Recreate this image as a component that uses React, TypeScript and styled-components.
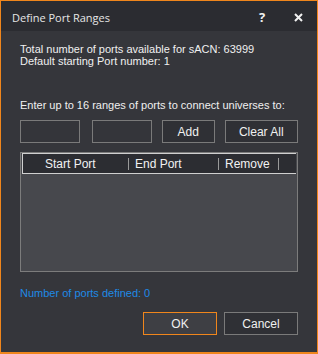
import React from "react";
import styled, { createGlobalStyle } from "styled-components";

const GlobalStyle = createGlobalStyle`
  html, body {
    margin: 0;
    padding: 0;
    background: #34353a;
  }
  * {
    box-sizing: border-box;
  }
`;

const Window = styled.div`
  width: 318px;
  height: 354px;
  display: flex;
  flex-direction: column;
  background: #35363b;
  border: 1px solid #f0861c;
  border-bottom-width: 2px;
  font-family: "Liberation Sans", Arial, sans-serif;
  font-size: 11px;
  color: #f0f0f0;
`;

const TitleBar = styled.div`
  height: 30px;
  display: flex;
  align-items: center;
  padding: 2px 0 0 11px;
  background: #2b2c31;
`;

const Title = styled.div`
  flex: 1;
  font-family: "Open Sans", "Noto Sans", sans-serif;
  font-size: 11px;
  color: #e6e6e6;
`;

const TitleButton = styled.div<{ $w: number }>`
  width: ${(p) => p.$w}px;
  display: flex;
  justify-content: center;
  align-items: center;
  font-family: "Open Sans", sans-serif;
  font-weight: 700;
  font-size: 13px;
  color: #f2f2f2;
`;

const Body = styled.div`
  flex: 1;
  display: flex;
  flex-direction: column;
  padding: 12px 19px 0 19px;
`;

const Info = styled.div`
  line-height: 12px;
`;

const Prompt = styled.div`
  margin-top: 32px;
  line-height: 13px;
`;

const InputRow = styled.div`
  display: flex;
  margin-top: 8px;
  height: 23px;
  gap: 10px;
`;

const Field = styled.input<{ $gap?: number }>`
  width: 60px;
  height: 23px;
  margin-right: ${(p) => p.$gap ?? 0}px;
  background: #34353a;
  border: 1px solid #7a7a7a;
  outline: none;
  color: #f0f0f0;
`;

const Button = styled.button<{ $w: number; $primary?: boolean }>`
  width: ${(p) => p.$w}px;
  height: 23px;
  padding: 0;
  background: ${(p) => (p.$primary ? "#3e3f44" : "#2f3035")};
  border: 1px solid ${(p) => (p.$primary ? "#f0861c" : "#7a7a7a")};
  color: #f0f0f0;
  font-family: "Liberation Sans", Arial, sans-serif;
  font-size: 12px;
`;

const Table = styled.div`
  margin-top: 9px;
  height: 120px;
  border: 1px solid #7c7c7c;
  background: #47484d;
  padding: 0 0 0 1px;
  display: flex;
  flex-direction: column;
`;

const Header = styled.div`
  display: grid;
  grid-template-columns: 106px 90px 60px 1fr;
  height: 21px;
  background: #2c2d32;
  border-top: 1px solid #d0d0d0;
  border-bottom: 1px solid #d0d0d0;
  border-left: 1px solid #d0d0d0;
  margin-right: 1px;
`;

const HeadCell = styled.div<{ $pad: number; $sep?: boolean }>`
  display: flex;
  align-items: center;
  padding-left: ${(p) => p.$pad}px;
  position: relative;
  font-size: 12px;
  color: #f2f2f2;
  ${(p) =>
    p.$sep &&
    `&::after {
      content: "";
      position: absolute;
      right: 0;
      top: 4px;
      bottom: 3px;
      width: 1px;
      background: #9a9a9a;
    }`}
`;

const Status = styled.div`
  margin-top: 15px;
  color: #1e8ae6;
  line-height: 13px;
`;

const Footer = styled.div`
  display: flex;
  justify-content: flex-end;
  gap: 7px;
  margin-top: 12px;
`;

export default function App() {
  return (
    <>
      <GlobalStyle />
      <Window>
        <TitleBar>
          <Title>Define Port Ranges</Title>
          <TitleButton $w={36}>?</TitleButton>
          <TitleButton $w={36}>
            <svg width="9" height="9" viewBox="0 0 9 9">
              <path d="M1 1 L8 8 M8 1 L1 8" stroke="#f2f2f2" strokeWidth="2" />
            </svg>
          </TitleButton>
          <div style={{ width: 1 }} />
        </TitleBar>
        <Body>
          <Info>
            Total number of ports available for sACN: 63999
            <br />
            Default starting Port number: 1
          </Info>
          <Prompt>Enter up to 16 ranges of ports to connect universes to:</Prompt>
          <InputRow>
            <Field $gap={2} />
            <Field />
            <Button $w={53}>Add</Button>
            <Button $w={74}>Clear All</Button>
          </InputRow>
          <Table>
            <Header>
              <HeadCell $pad={22} $sep>Start Port</HeadCell>
              <HeadCell $pad={6} $sep>End Port</HeadCell>
              <HeadCell $pad={6} $sep>Remove</HeadCell>
              <HeadCell $pad={0} />
            </Header>
          </Table>
          <Status>Number of ports defined: 0</Status>
          <Footer>
            <Button $w={74} $primary>OK</Button>
            <Button $w={74}>Cancel</Button>
          </Footer>
        </Body>
      </Window>
    </>
  );
}
